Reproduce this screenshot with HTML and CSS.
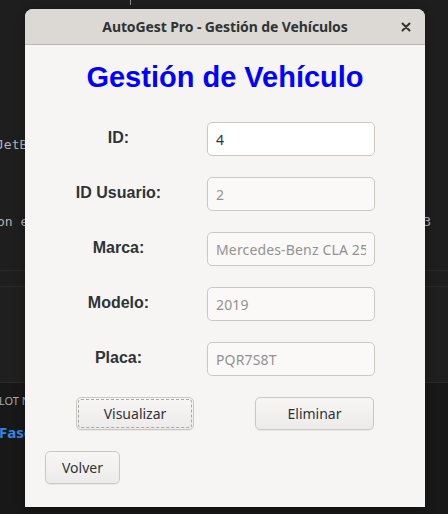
FILE: index.html
```html
<!DOCTYPE html>
<html lang="es">
<head>
<meta charset="utf-8">
<title>AutoGest Pro</title>
<link rel="stylesheet" href="styles.css">
</head>
<body>
<div class="desktop">
  <div class="editor">
    <div class="tick"></div>
    <div class="code first">JetBrains Mono</div>
    <div class="code second"><span>on el</span><span class="tail">3</span></div>
  </div>
  <div class="tabbar"></div>
  <div class="panel"></div>
  <div class="bottom">
    <div class="small">SLOT N</div>
    <div class="link">Fase</div>
  </div>

  <div class="window">
    <div class="titlebar">
      <span class="wtitle">AutoGest Pro - Gestión de Vehículos</span>
      <svg class="close" width="10" height="10" viewBox="0 0 10 10"><path d="M1.5 1.5 L8.5 8.5 M8.5 1.5 L1.5 8.5" stroke="#2e3436" stroke-width="2" stroke-linecap="round"/></svg>
    </div>
    <div class="content">
      <h1 class="heading">Gestión de Vehículo</h1>
      <div class="form">
        <label class="lbl">ID:</label>
        <div class="field active"><input class="entry" value="4"></div>
        <label class="lbl">ID Usuario:</label>
        <div class="field dim"><input class="entry" value="2" readonly></div>
        <label class="lbl">Marca:</label>
        <div class="field dim"><input class="entry" value="Mercedes-Benz CLA 250" readonly></div>
        <label class="lbl">Modelo:</label>
        <div class="field dim"><input class="entry" value="2019" readonly></div>
        <label class="lbl">Placa:</label>
        <div class="field dim"><input class="entry" value="PQR7S8T" readonly></div>
      </div>
      <div class="actions">
        <button class="btn focus w-vis">Visualizar</button>
        <button class="btn w-eli">Eliminar</button>
      </div>
      <div class="back">
        <button class="btn w-vol">Volver</button>
      </div>
    </div>
  </div>
</div>
</body>
</html>
```

FILE: styles.css
```css
* { box-sizing: border-box; }
html, body { margin: 0; padding: 0; }
body { background: #1e1e1e; width: 448px; height: 514px; overflow: hidden; }

.desktop { position: relative; width: 448px; height: 514px; display: flex; flex-direction: column; }

.editor { height: 270px; background: #1e1e1e; position: relative; padding-top: 136px; }
.tick { position: absolute; left: 130px; top: 0; width: 1px; height: 5px; background: #8a8a8a; }
.code { font-family: "DejaVu Sans Mono", monospace; font-size: 13px; line-height: 18px; color: #b4b4b4; white-space: nowrap; margin-left: -4px; }
.second { margin-top: 59px; display: flex; justify-content: space-between; width: 434px; margin-left: -3px; }
.tabbar { height: 17px; background: #1e1e1e; border-top: 1px solid #2a2a2a; border-bottom: 1px solid #2a2a2a; }
.panel { height: 96px; background: #1f1f1f; border-bottom: 1px solid #2b2b2b; }
.bottom { flex: 1; background: #181818; padding-top: 10px; }
.small { font-family: "Noto Sans", sans-serif; font-size: 11px; line-height: 16px; color: #a8a8a8; margin-left: -7px; white-space: nowrap; }
.link { font-family: "Noto Sans", sans-serif; font-weight: bold; font-size: 15px; line-height: 20px; color: #3584e4; margin-top: 13px; margin-left: -1px; }

.window { position: absolute; left: 25px; top: 9px; width: 400px; height: 498px; border-radius: 8px 8px 0 0; overflow: hidden; background: #f6f5f4; display: flex; flex-direction: column; box-shadow: 0 2px 8px rgba(0,0,0,0.35); }
.titlebar { height: 36px; flex: none; background: #dcd8d4; border-bottom: 1px solid #bfb8b1; display: flex; align-items: center; justify-content: center; position: relative; }
.wtitle { font-family: "Noto Sans", sans-serif; font-weight: bold; font-size: 14px; color: #2e3436; letter-spacing: -0.1px; }
.close { position: absolute; right: 14px; top: 13px; }

.content { flex: 1; padding-top: 16px; }
.heading { margin: 0; text-align: center; font-family: "Liberation Sans", Arial, sans-serif; font-weight: bold; font-size: 29px; line-height: 33px; color: #0000ff; }

.form { display: grid; grid-template-columns: 147px 168px; column-gap: 15px; row-gap: 21px; padding-left: 20px; margin-top: 28px; align-items: center; }
.lbl { text-align: center; font-family: "Liberation Sans", Arial, sans-serif; font-weight: bold; font-size: 16px; color: #2e3436; line-height: 20px; margin-top: -2px; }
.field { height: 34px; width: 168px; border: 1px solid #cdc7c2; border-radius: 5px; padding: 0 8px; display: flex; align-items: center; }
.entry { width: 100%; height: 100%; border: none; padding: 0; margin: 0; background: transparent; outline: none; font-family: "Noto Sans", sans-serif; font-size: 14px; color: inherit; letter-spacing: inherit; }
.active { background: #ffffff; color: #2e3436; }
.dim { background: #faf9f8; color: #929292; letter-spacing: 0.15px; }

.actions { display: flex; padding-left: 51px; gap: 61px; margin-top: 21px; }
.back { padding-left: 20px; margin-top: 21px; }
.btn { height: 33px; border: 1px solid #cdc7c2; border-radius: 5px; background: linear-gradient(#f7f6f5, #edebe9); font-family: "Noto Sans", sans-serif; font-size: 14px; color: #2e3436; padding: 0; margin: 0; box-shadow: 0 1px 0 rgba(0,0,0,0.05); }
.focus { outline: 1px dashed #a8a8a8; outline-offset: -3px; }
.w-vis { width: 118px; }
.w-eli { width: 119px; }
.w-vol { width: 75px; }
```
